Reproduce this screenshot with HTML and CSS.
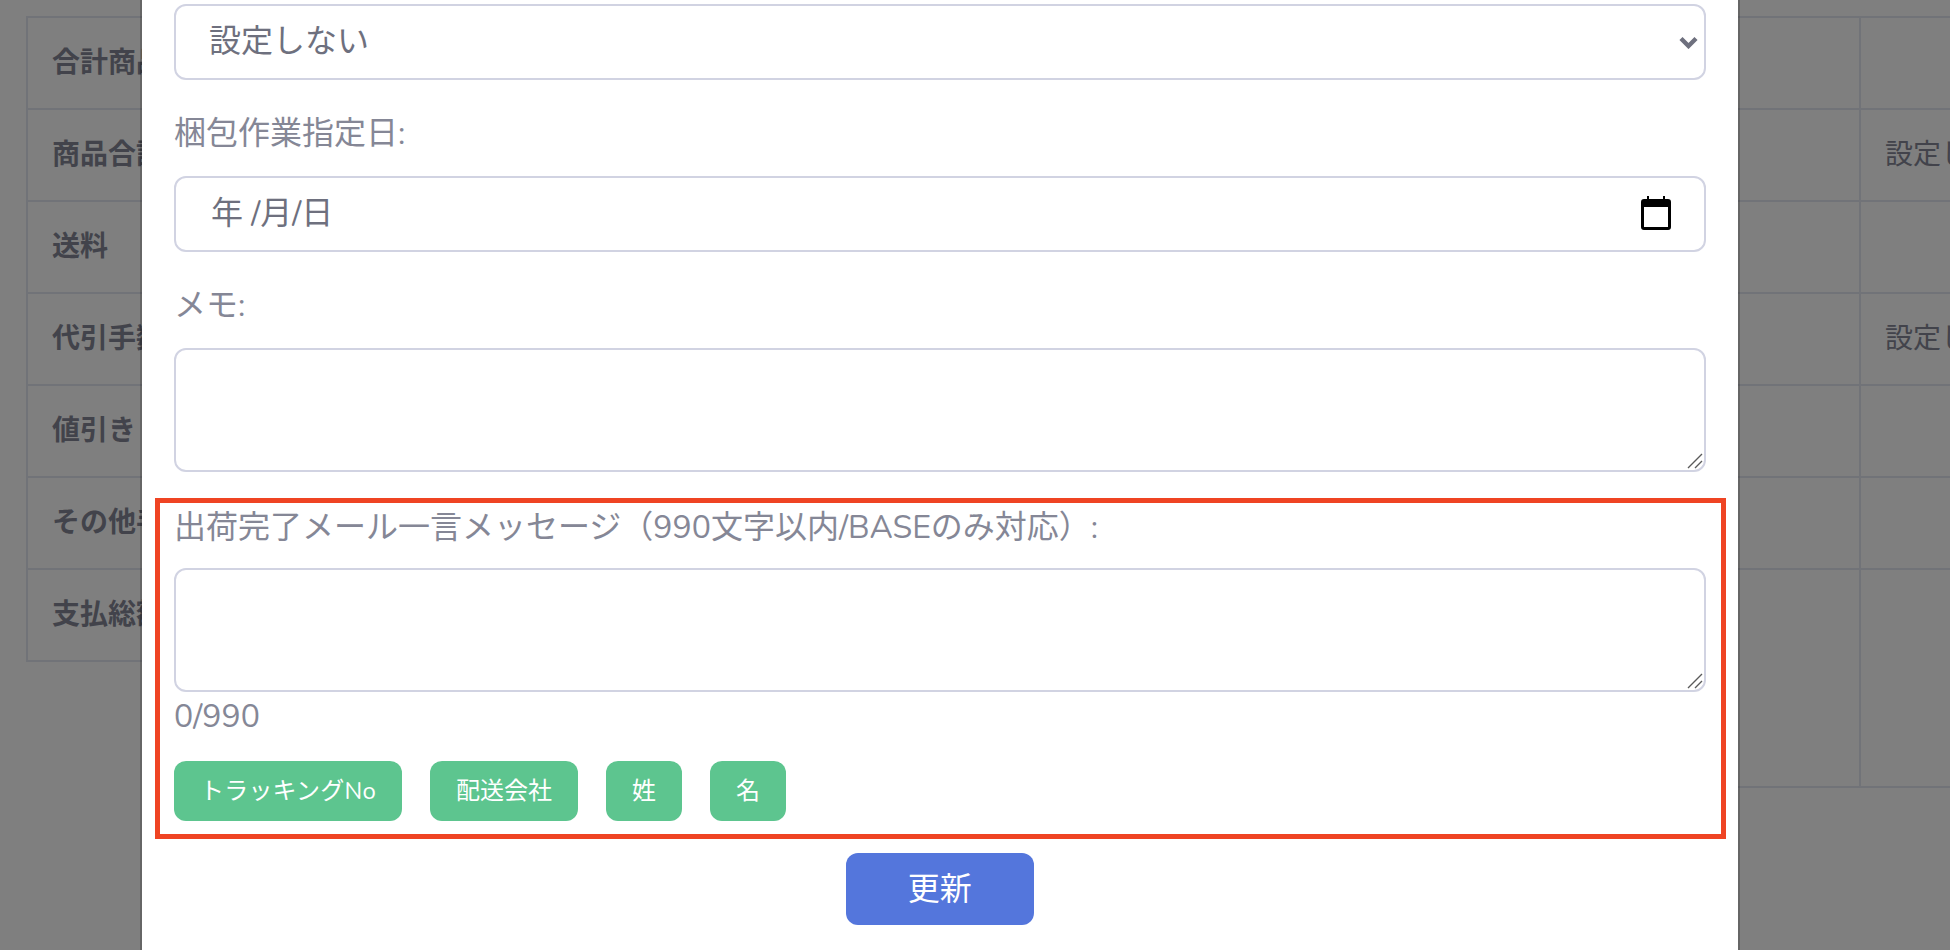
FILE: index.html
```html
<!DOCTYPE html>
<html lang="ja">
<head>
    <meta charset="utf-8">
    <title>注文編集</title>
    <link rel="stylesheet" href="styles.css">
</head>
<body>
<div class="page">
    <table class="summary">
        <tr><th>合計商品数</th></tr>
        <tr><th>商品合計</th></tr>
        <tr><th>送料</th></tr>
        <tr><th>代引手数料</th></tr>
        <tr><th>値引き</th></tr>
        <tr><th>その他手数料</th></tr>
        <tr><th>支払総額</th></tr>
    </table>
    <table class="detail">
        <tr><td class="col-one"></td><td></td></tr>
        <tr><td class="col-one"></td><td>設定しない</td></tr>
        <tr><td class="col-one"></td><td></td></tr>
        <tr><td class="col-one"></td><td>設定しない</td></tr>
        <tr><td class="col-one"></td><td></td></tr>
        <tr><td class="col-one"></td><td></td></tr>
        <tr class="row-tall"><td class="col-one"></td><td></td></tr>
    </table>
</div>
<div class="backdrop"></div>
<div class="modal">
    <div class="group">
        <div class="select-wrap">
            <select class="control select">
                <option>設定しない</option>
            </select>
            <svg class="chevron" width="19" height="13" viewBox="0 0 19 13"><path d="M2 2.5l7.5 7.5L17 2.5" fill="none" stroke="#6e707e" stroke-width="4.4"/></svg>
        </div>
    </div>
    <div class="group">
        <label class="label">梱包作業指定日:</label>
        <div class="control date">
            <span>年 /月/日</span>
            <svg width="30" height="34" viewBox="0 0 30 34"><path fill-rule="evenodd" d="M6 0h2v3h14V0h2v3h3a3 3 0 0 1 3 3v25a3 3 0 0 1-3 3H3a3 3 0 0 1-3-3V6a3 3 0 0 1 3-3h3zM3 11v20h24V11z"/></svg>
        </div>
    </div>
    <div class="group group-memo">
        <label class="label">メモ:</label>
        <div class="area-wrap">
            <textarea class="control area"></textarea>
            <svg class="grip" width="16" height="16" viewBox="0 0 16 16"><path d="M1 15L15 1M8 15l7-7" fill="none" stroke="#5a5a5a" stroke-width="1.4"/></svg>
        </div>
    </div>
    <div class="highlight">
        <label class="label">出荷完了メール一言メッセージ（990文字以内/BASEのみ対応）:</label>
        <div class="area-wrap">
            <textarea class="control area"></textarea>
            <svg class="grip" width="16" height="16" viewBox="0 0 16 16"><path d="M1 15L15 1M8 15l7-7" fill="none" stroke="#5a5a5a" stroke-width="1.4"/></svg>
        </div>
        <div class="count">0/990</div>
        <div class="tags">
            <button class="tag tag-wide">トラッキングNo</button>
            <button class="tag">配送会社</button>
            <button class="tag">姓</button>
            <button class="tag">名</button>
        </div>
    </div>
    <div class="actions">
        <button class="button-update">更新</button>
    </div>
</div>
</body>
</html>
```

FILE: styles.css
```css
* {
    box-sizing: border-box;
}

html, body {
    height: 100%;
}

body {
    margin: 0;
    background-color: #fff;
    overflow: hidden;
    font-family: "Nunito", "Lato", "Noto Sans CJK JP", sans-serif;
    font-size: 32px;
    line-height: 45px;
    color: #858796;
}

.page {
    display: flex;
    width: 2300px;
    padding: 16px 0 0 26px;
    align-items: flex-start;
}

table {
    border-collapse: collapse;
    table-layout: fixed;
    font-size: 28px;
}

th, td {
    height: 92px;
    padding: 0 24px;
    border: 2px solid #e3e6f0;
    white-space: nowrap;
    overflow: hidden;
    text-align: left;
    vertical-align: middle;
}

th {
    font-weight: bold;
}

.summary {
    width: 974px;
}

.detail {
    width: 1300px;
}

.col-one {
    width: 859px;
}

.row-tall td {
    height: 218px;
}

.backdrop {
    position: fixed;
    inset: 0;
    background-color: rgba(0, 0, 0, 0.5);
}

.modal {
    position: fixed;
    top: 0;
    bottom: 0;
    left: 140px;
    width: 1600px;
    padding: 4px 32.5px 0 32px;
    background-color: #fff;
    border-left: 2px solid rgba(0, 0, 0, 0.2);
    border-right: 2px solid rgba(0, 0, 0, 0.2);
    background-clip: padding-box;
}

.group {
    margin-bottom: 31px;
}

.group-memo {
    margin-bottom: 26px;
}

.label {
    display: block;
    margin-bottom: 20px;
}

.control {
    display: block;
    width: 100%;
    height: 76px;
    background-color: #fff;
    border: 2px solid #d1d3e2;
    border-radius: 12px;
    font: inherit;
    color: #6e707e;
    outline: none;
}

.select-wrap, .area-wrap {
    position: relative;
}

.select {
    appearance: none;
    padding: 0 33px 2px;
}

.chevron {
    position: absolute;
    top: 32px;
    right: 8px;
    pointer-events: none;
}

.date {
    display: flex;
    align-items: center;
    justify-content: space-between;
    padding: 0 33px 2px 35px;
}

.area {
    height: 124px;
    padding: 12px 24px;
    resize: none;
}

.grip {
    position: absolute;
    right: 3px;
    bottom: 3px;
    pointer-events: none;
}

.highlight {
    margin: 0 -20.5px 0 -19px;
    padding: 2px 15.5px 13px 14px;
    border: 5px solid #ef4423;
}

.highlight .label {
    margin-bottom: 18px;
}

.count {
    margin-top: 2px;
}

.tags {
    display: flex;
    gap: 28px;
    margin-top: 22px;
}

.tag {
    height: 60px;
    padding: 0 26px;
    border: none;
    border-radius: 12px;
    background-color: #5dc58f;
    color: #fff;
    font: inherit;
    font-size: 24px;
}

.tag-wide {
    letter-spacing: 0.2px;
}

.actions {
    margin-top: 14px;
    text-align: center;
}

.button-update {
    width: 188px;
    height: 72px;
    border: none;
    border-radius: 12px;
    background-color: #5476dc;
    color: #fff;
    font: inherit;
    font-size: 32px;
}
```
